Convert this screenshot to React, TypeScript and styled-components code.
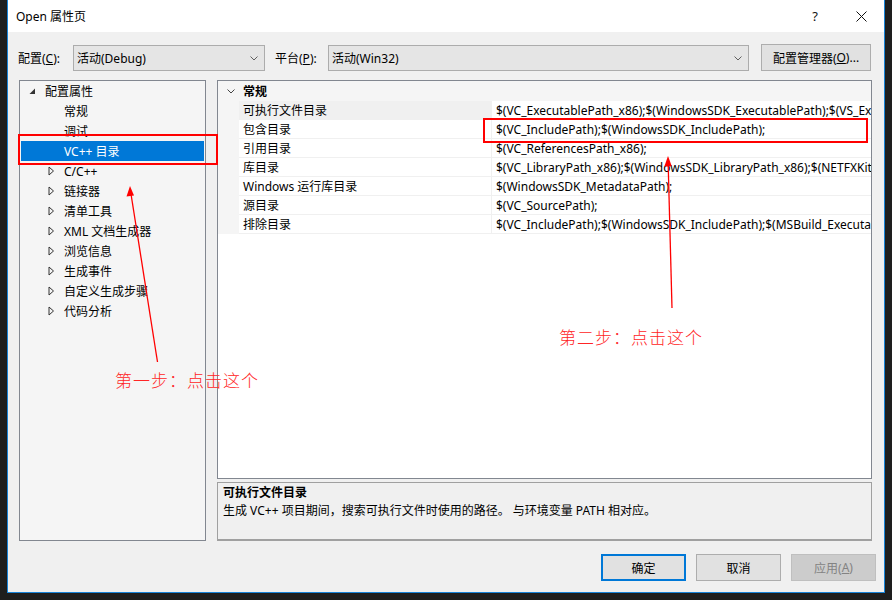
import React from "react";
import styled, { createGlobalStyle, css } from "styled-components";

const Global = createGlobalStyle`
  html, body { margin: 0; padding: 0; background: #1e1e1e; }
  body { font-family: "Noto Sans", "Noto Sans CJK SC", sans-serif; font-size: 12px; color: #000; }
  * { box-sizing: border-box; }
`;

const UI_FONT = `"Noto Sans", "Noto Sans CJK SC", sans-serif`;

const Desktop = styled.div`
  position: relative;
  width: 892px;
  height: 600px;
  background: #1e1e1e;
  overflow: hidden;
`;

const Window = styled.div`
  margin-left: 7px;
  width: 878px;
  height: 593px;
  border: 1px solid #1883d7;
  border-top: none;
  display: flex;
  flex-direction: column;
  background: #f0f0f0;
  font-family: ${UI_FONT};
  font-size: 12px;
  overflow: hidden;
`;

const TitleBar = styled.div`
  height: 32px;
  background: #fff;
  display: flex;
  align-items: center;
  padding-left: 8px;
  flex-shrink: 0;
`;

const Title = styled.div`
  flex: 1;
  font-size: 12px;
  color: #000;
`;

const TitleButton = styled.div`
  width: 46px;
  height: 32px;
  display: flex;
  align-items: center;
  justify-content: center;
  font-size: 13px;
  color: #111;
`;

const Body = styled.div`
  flex: 1;
  min-width: 0;
  display: flex;
  flex-direction: column;
  padding: 12px 12px 0 11px;
`;

const Toolbar = styled.div`
  height: 27px;
  display: flex;
  align-items: center;
`;

const Label = styled.div<{ $w: number; $ml?: number }>`
  width: ${(p) => p.$w}px;
  flex-shrink: 0;
  margin-left: ${(p) => p.$ml ?? 0}px;
  white-space: nowrap;
  u { text-decoration: underline; }
`;

const Combo = styled.div<{ $w: number }>`
  width: ${(p) => p.$w}px;
  flex-shrink: 0;
  height: 26px;
  background: #e5e5e5;
  border: 1px solid #acacac;
  display: flex;
  align-items: center;
  padding: 0 6px 0 3px;
  margin-top: 1px;
`;

const ComboText = styled.div`
  flex: 1;
  white-space: nowrap;
`;

const ToolButton = styled.div`
  width: 110px;
  flex-shrink: 0;
  height: 27px;
  margin-left: 12px;
  background: #e1e1e1;
  border: 1px solid #adadad;
  display: flex;
  align-items: center;
  justify-content: center;
  white-space: nowrap;
  u { text-decoration: underline; }
`;

const Main = styled.div`
  margin-top: 9px;
  height: 461px;
  display: flex;
  gap: 11px;
  min-width: 0;
`;

const Tree = styled.div`
  width: 187px;
  flex-shrink: 0;
  border: 1px solid #828790;
  background: #f5f5f5;
  display: flex;
  flex-direction: column;
`;

const TreeRow = styled.div<{ $level: number; $selected?: boolean }>`
  height: 20px;
  display: flex;
  align-items: center;
  padding-left: ${(p) => (p.$level === 0 ? 9 : 28)}px;
  white-space: nowrap;
  ${(p) =>
    p.$selected &&
    css`
      background: #0078d7;
      color: #fff;
      margin: 0 1px;
      padding-left: ${p.$level === 0 ? 8 : 27}px;
    `}
`;

const Expander = styled.div`
  width: 16px;
  height: 20px;
  display: flex;
  align-items: center;
  flex-shrink: 0;
`;

const RightCol = styled.div`
  flex: 1;
  min-width: 0;
  display: flex;
  flex-direction: column;
  gap: 3px;
`;

const Grid = styled.div`
  flex: 1;
  min-width: 0;
  border: 1px solid #828790;
  background: #fff;
  overflow: hidden;
`;

const GroupHeader = styled.div`
  height: 20px;
  background: #f5f5f5;
  display: flex;
  align-items: center;
  font-weight: bold;
`;

const GroupChevron = styled.div`
  width: 25px;
  display: flex;
  justify-content: center;
  padding-left: 1px;
`;

const PropRow = styled.div`
  height: 19px;
  display: flex;
  min-width: 0;
`;

const Gutter = styled.div`
  width: 21px;
  background: #f5f5f5;
  flex-shrink: 0;
`;

const NameCell = styled.div<{ $selected?: boolean }>`
  width: 252px;
  flex-shrink: 0;
  padding-left: 4px;
  display: flex;
  align-items: center;
  border-bottom: 1px solid #f0f0f0;
  background: ${(p) => (p.$selected ? "#f0f0f0" : "#fff")};
  white-space: nowrap;
`;

const ValueCell = styled.div`
  flex: 1;
  min-width: 0;
  padding-left: 4px;
  display: flex;
  align-items: center;
  border-left: 1px solid #f0f0f0;
  border-bottom: 1px solid #f0f0f0;
  white-space: nowrap;
  overflow: hidden;
`;

const Desc = styled.div`
  height: 59px;
  flex-shrink: 0;
  border: 1px solid #a0a0a0;
  border-bottom: 2px solid #a0a0a0;
  background: #f0f0f0;
  padding: 1px 5px;
`;

const DescTitle = styled.div`
  font-weight: bold;
  line-height: 18px;
`;

const DescText = styled.div`
  line-height: 18px;
`;

const Footer = styled.div`
  margin-top: 13px;
  margin-right: -4px;
  display: flex;
  justify-content: flex-end;
  gap: 10px;
`;

const DlgButton = styled.div<{ $variant?: "primary" | "disabled" }>`
  width: 85px;
  height: 27px;
  display: flex;
  align-items: center;
  justify-content: center;
  background: #e1e1e1;
  border: 1px solid #adadad;
  u { text-decoration: underline; }
  ${(p) =>
    p.$variant === "primary" &&
    css`
      border: 2px solid #0078d7;
    `}
  ${(p) =>
    p.$variant === "disabled" &&
    css`
      background: #cccccc;
      border-color: #bfbfbf;
      color: #838383;
    `}
`;

const Overlay = styled.svg`
  position: absolute;
  left: 0;
  top: 0;
  pointer-events: none;
`;

const Callout = styled.div<{ $x: number; $y: number }>`
  position: absolute;
  left: ${(p) => p.$x}px;
  top: ${(p) => p.$y}px;
  color: #ff2525;
  font-family: "Noto Sans CJK SC", sans-serif;
  font-weight: 300;
  font-size: 17px;
  letter-spacing: 1px;
  white-space: nowrap;
  pointer-events: none;
`;

const ChevronDown = ({ color = "#606060" }: { color?: string }) => (
  <svg width="8" height="5" viewBox="0 0 8 5">
    <polyline points="0.5,0.5 4,4 7.5,0.5" fill="none" stroke={color} strokeWidth="1" />
  </svg>
);

const ExpandedTri = () => (
  <svg width="7" height="7" viewBox="0 0 7 7">
    <polygon points="6,0.5 6,6 0.5,6" fill="#333" />
  </svg>
);

const CollapsedTri = () => (
  <svg width="7" height="10" viewBox="0 0 7 10">
    <polygon points="1,1 5.5,5 1,9" fill="none" stroke="#333" strokeWidth="1" />
  </svg>
);

const treeItems: { label: string; level: number; kind: "open" | "closed" | "leaf"; selected?: boolean }[] = [
  { label: "配置属性", level: 0, kind: "open" },
  { label: "常规", level: 1, kind: "leaf" },
  { label: "调试", level: 1, kind: "leaf" },
  { label: "VC++ 目录", level: 1, kind: "leaf", selected: true },
  { label: "C/C++", level: 1, kind: "closed" },
  { label: "链接器", level: 1, kind: "closed" },
  { label: "清单工具", level: 1, kind: "closed" },
  { label: "XML 文档生成器", level: 1, kind: "closed" },
  { label: "浏览信息", level: 1, kind: "closed" },
  { label: "生成事件", level: 1, kind: "closed" },
  { label: "自定义生成步骤", level: 1, kind: "closed" },
  { label: "代码分析", level: 1, kind: "closed" },
];

const props: { name: string; value: string; selected?: boolean }[] = [
  {
    name: "可执行文件目录",
    value: "$(VC_ExecutablePath_x86);$(WindowsSDK_ExecutablePath);$(VS_ExecutablePath)",
    selected: true,
  },
  { name: "包含目录", value: "$(VC_IncludePath);$(WindowsSDK_IncludePath);" },
  { name: "引用目录", value: "$(VC_ReferencesPath_x86);" },
  {
    name: "库目录",
    value: "$(VC_LibraryPath_x86);$(WindowsSDK_LibraryPath_x86);$(NETFXKitsDir)",
  },
  { name: "Windows 运行库目录", value: "$(WindowsSDK_MetadataPath);" },
  { name: "源目录", value: "$(VC_SourcePath);" },
  {
    name: "排除目录",
    value: "$(VC_IncludePath);$(WindowsSDK_IncludePath);$(MSBuild_ExecutablePath)",
  },
];

export default function App() {
  return (
    <>
      <Global />
      <Desktop>
        <Window>
          <TitleBar>
            <Title>Open 属性页</Title>
            <TitleButton>?</TitleButton>
            <TitleButton>
              <svg width="11" height="11" viewBox="0 0 11 11">
                <path d="M0.5 0.5 L10.5 10.5 M10.5 0.5 L0.5 10.5" stroke="#111" strokeWidth="1" />
              </svg>
            </TitleButton>
          </TitleBar>
          <Body>
            <Toolbar>
              <Label $w={55} $ml={-1}>
                配置(<u>C</u>):
              </Label>
              <Combo $w={192}>
                <ComboText>活动(Debug)</ComboText>
                <ChevronDown />
              </Combo>
              <Label $w={53} $ml={10}>
                平台(<u>P</u>):
              </Label>
              <Combo $w={421}>
                <ComboText>活动(Win32)</ComboText>
                <ChevronDown />
              </Combo>
              <ToolButton>
                配置管理器(<u>O</u>)...
              </ToolButton>
            </Toolbar>
            <Main>
              <Tree>
                {treeItems.map((it) => (
                  <TreeRow key={it.label} $level={it.level} $selected={it.selected}>
                    <Expander>
                      {it.kind === "open" && <ExpandedTri />}
                      {it.kind === "closed" && <CollapsedTri />}
                    </Expander>
                    {it.label}
                  </TreeRow>
                ))}
              </Tree>
              <RightCol>
                <Grid>
                  <GroupHeader>
                    <GroupChevron>
                      <ChevronDown color="#444" />
                    </GroupChevron>
                    常规
                  </GroupHeader>
                  {props.map((p) => (
                    <PropRow key={p.name}>
                      <Gutter />
                      <NameCell $selected={p.selected}>{p.name}</NameCell>
                      <ValueCell>{p.value}</ValueCell>
                    </PropRow>
                  ))}
                </Grid>
                <Desc>
                  <DescTitle>可执行文件目录</DescTitle>
                  <DescText>生成 VC++ 项目期间，搜索可执行文件时使用的路径。 与环境变量 PATH 相对应。</DescText>
                </Desc>
              </RightCol>
            </Main>
            <Footer>
              <DlgButton $variant="primary">确定</DlgButton>
              <DlgButton>取消</DlgButton>
              <DlgButton $variant="disabled">
                应用(<u>A</u>)
              </DlgButton>
            </Footer>
          </Body>
        </Window>

        <Overlay width="892" height="600" viewBox="0 0 892 600">
          <rect x="19" y="135" width="198" height="29" fill="none" stroke="#ff0000" strokeWidth="2" />
          <rect x="484" y="119" width="383" height="23" fill="none" stroke="#ff0000" strokeWidth="2" />
          <line x1="157.5" y1="362" x2="131" y2="194" stroke="#ff0000" strokeWidth="1.3" />
          <polygon points="130,186 126.5,196.5 134,195.5" fill="#ff0000" />
          <line x1="672" y1="308" x2="668.2" y2="165" stroke="#ff0000" strokeWidth="1.3" />
          <polygon points="668,156 664.3,166.5 671.8,166.3" fill="#ff0000" />
        </Overlay>
        <Callout $x={115} $y={367}>第一步：点击这个</Callout>
        <Callout $x={559} $y={324}>第二步：点击这个</Callout>
      </Desktop>
    </>
  );
}
